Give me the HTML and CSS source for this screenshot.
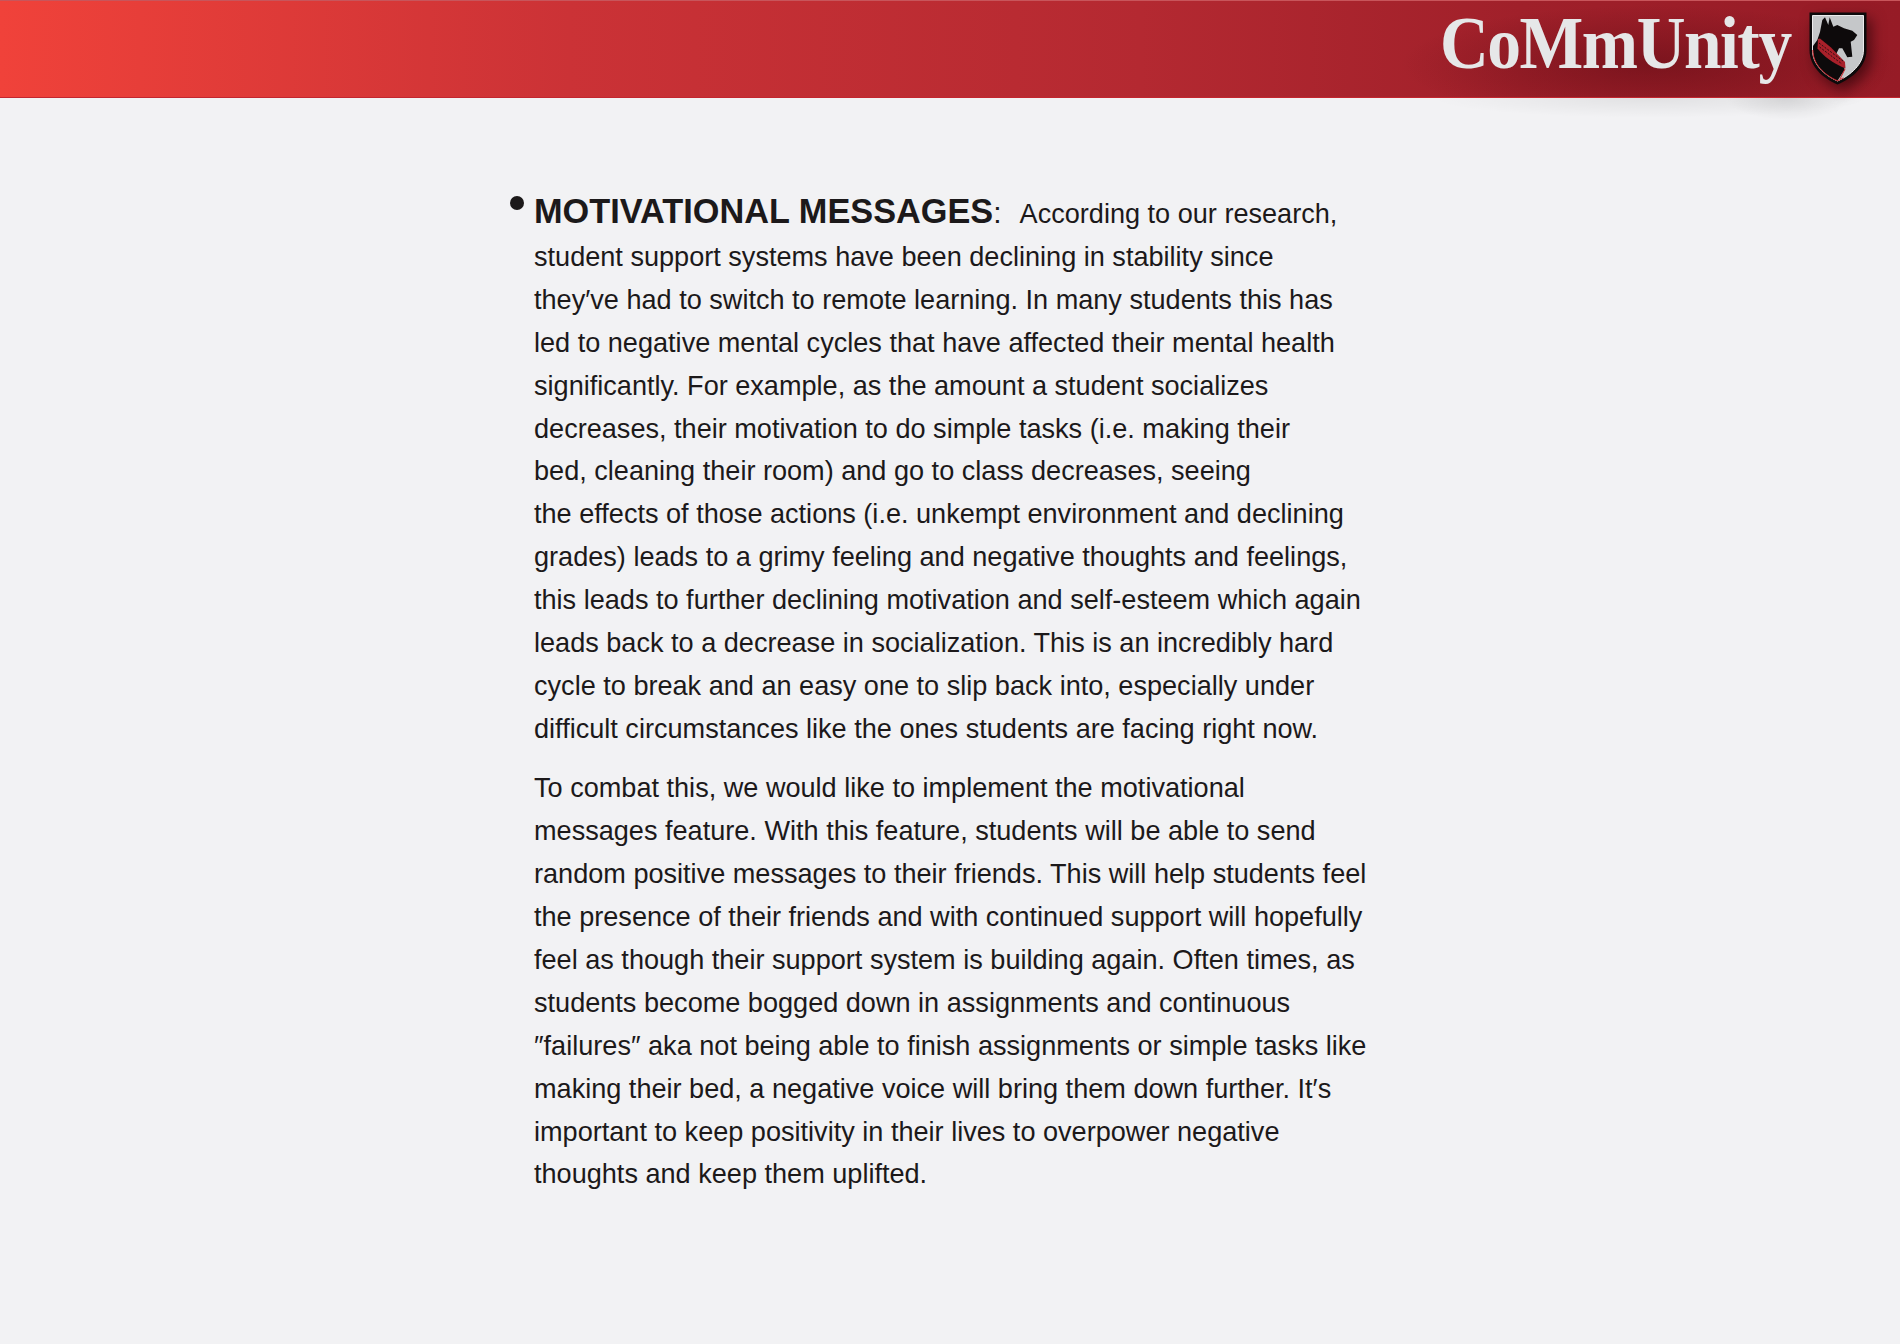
FILE: index.html
```html
<!DOCTYPE html>
<html lang="en">
<head>
<meta charset="utf-8">
<title>CoMmUnity</title>
<link rel="stylesheet" href="styles.css">
</head>
<body>
<header class="banner">
  <div class="brand">
    <div class="wordmark">CoMmUnity</div>
    <svg class="crest" viewBox="0 0 58 73" aria-hidden="true">
      <path d="M0.500 0.500H57.500V38C57.500 54 44 66 28.500 72.500C13 66 0.500 54 0.500 38Z" fill="#0d0a0b"/>
      <path d="M3.500 3.500H54.500V38C54.500 52 42 63 28.500 69C15 63 3.500 52 3.500 38Z" fill="#c5c7c9" stroke="#ececed" stroke-width="1"/>
      <path d="M16 5.300L19.300 13L20.700 5.300L24.300 14.700L28.300 13L35 16.300L43.300 18.700L48.300 23L45 28L41.700 29.700L43.300 44.700L38.300 45.300L33.300 36.300L30 36.300L26.700 43L35 51.300L35.500 58L28.300 69C15 63 4 52 4 38V34L8.300 28L11 20L13.300 8Z" fill="#0d0a0b"/>
      <path d="M9 27L11 26.500L22 35.500L36 50L36.500 56.500L33 55C24 50.500 15 45 8.500 36.500Z" fill="#a8202a"/>
      <path d="M10 31L34 49M10.500 35L33 52" stroke="#0d0a0b" stroke-width="0.800" stroke-dasharray="2 1.500" fill="none"/>
      <path d="M3.800 38C3.800 52 15 62.800 28.500 68.800C30.500 68 32.500 67 34.500 65.800" stroke="#d2232a" stroke-width="1" fill="none"/>
      <path d="M36 57L31 67" stroke="#d2232a" stroke-width="1" fill="none"/>
    </svg>
  </div>
</header>
<main class="content">
  <div class="bullet-row">
    <span class="bullet"></span>
    <div class="body-copy">
      <p class="para"><strong class="lead">MOTIVATIONAL MESSAGES</strong><span class="colon">:</span>According to our research,<br>
      student support systems have been declining in stability since<br>
      they′ve had to switch to remote learning. In many students this has<br>
      led to negative mental cycles that have affected their mental health<br>
      significantly. For example, as the amount a student socializes<br>
      decreases, their motivation to do simple tasks (i.e. making their<br>
      bed, cleaning their room) and go to class decreases, seeing<br>
      the effects of those actions (i.e. unkempt environment and declining<br>
      grades) leads to a grimy feeling and negative thoughts and feelings,<br>
      this leads to further declining motivation and self-esteem which again<br>
      leads back to a decrease in socialization. This is an incredibly hard<br>
      cycle to break and an easy one to slip back into, especially under<br>
      difficult circumstances like the ones students are facing right now.</p>
      <p class="para">To combat this, we would like to implement the motivational<br>
      messages feature. With this feature, students will be able to send<br>
      random positive messages to their friends. This will help students feel<br>
      the presence of their friends and with continued support will hopefully<br>
      feel as though their support system is building again. Often times, as<br>
      students become bogged down in assignments and continuous<br>
      ″failures″ aka not being able to finish assignments or simple tasks like<br>
      making their bed, a negative voice will bring them down further. It′s<br>
      important to keep positivity in their lives to overpower negative<br>
      thoughts and keep them uplifted.</p>
    </div>
  </div>
</main>
</body>
</html>
```
FILE: styles.css
```css
html, body { margin: 0; padding: 0; }
body {
  width: 1900px;
  height: 1344px;
  overflow: hidden;
  background: #f2f2f4;
  color: #1c191a;
  font-family: "Liberation Sans", Arial, sans-serif;
}
.banner {
  position: relative;
  height: 98px;
  box-sizing: border-box;
  border-bottom: 1px solid #c3262f;
  border-top: 1px solid #c8555b;
  background: linear-gradient(90deg, #f0423a 0%, #cb3236 30%, #b42931 60%, #a0202a 80%, #961b26 100%);
  display: flex;
  justify-content: flex-end;
  align-items: flex-start;
}
.banner::after {
  content: "";
  position: absolute;
  left: 1440px;
  right: 20px;
  top: 97px;
  height: 22px;
  background:
    radial-gradient(ellipse 14% 100% at 79% 0, rgba(0, 0, 0, 0.10), rgba(0, 0, 0, 0) 100%),
    radial-gradient(ellipse 50% 90% at 48% 0, rgba(0, 0, 0, 0.07), rgba(0, 0, 0, 0) 100%);
}
.brand {
  display: flex;
  align-items: flex-start;
  gap: 18px;
  padding-right: 33px;
  height: 96px;
  background: radial-gradient(ellipse 50% 62% at 50% 66%, rgba(90, 10, 18, 0.5), rgba(90, 10, 18, 0) 100%);
}
.wordmark {
  font-family: "Liberation Serif", "Times New Roman", serif;
  font-size: 75px;
  font-weight: 700;
  line-height: 82px;
  letter-spacing: -1.600px;
  color: #e6e7e8;
  padding-top: 1px;
  transform: scaleX(0.9);
  transform-origin: right center;
}
.crest {
  width: 58px;
  height: 73px;
  margin-top: 11px;
  filter: drop-shadow(5px 6px 7px rgba(30, 0, 5, 0.6));
}
.content {
  padding: 92px 0 0 510px;
}
.bullet-row {
  display: flex;
  align-items: flex-start;
  gap: 10px;
}
.bullet {
  width: 14px;
  height: 14px;
  margin-top: 6px;
  flex: none;
  border-radius: 50%;
  background: #1c191a;
}
.body-copy {
  font-size: 27.100px;
  line-height: 42.900px;
}
.para {
  margin: 0 0 16.500px;
  white-space: nowrap;
}
.lead {
  font-size: 34.300px;
  font-weight: 700;
}
.colon {
  font-size: 30px;
  margin-right: 18px;
}
```
